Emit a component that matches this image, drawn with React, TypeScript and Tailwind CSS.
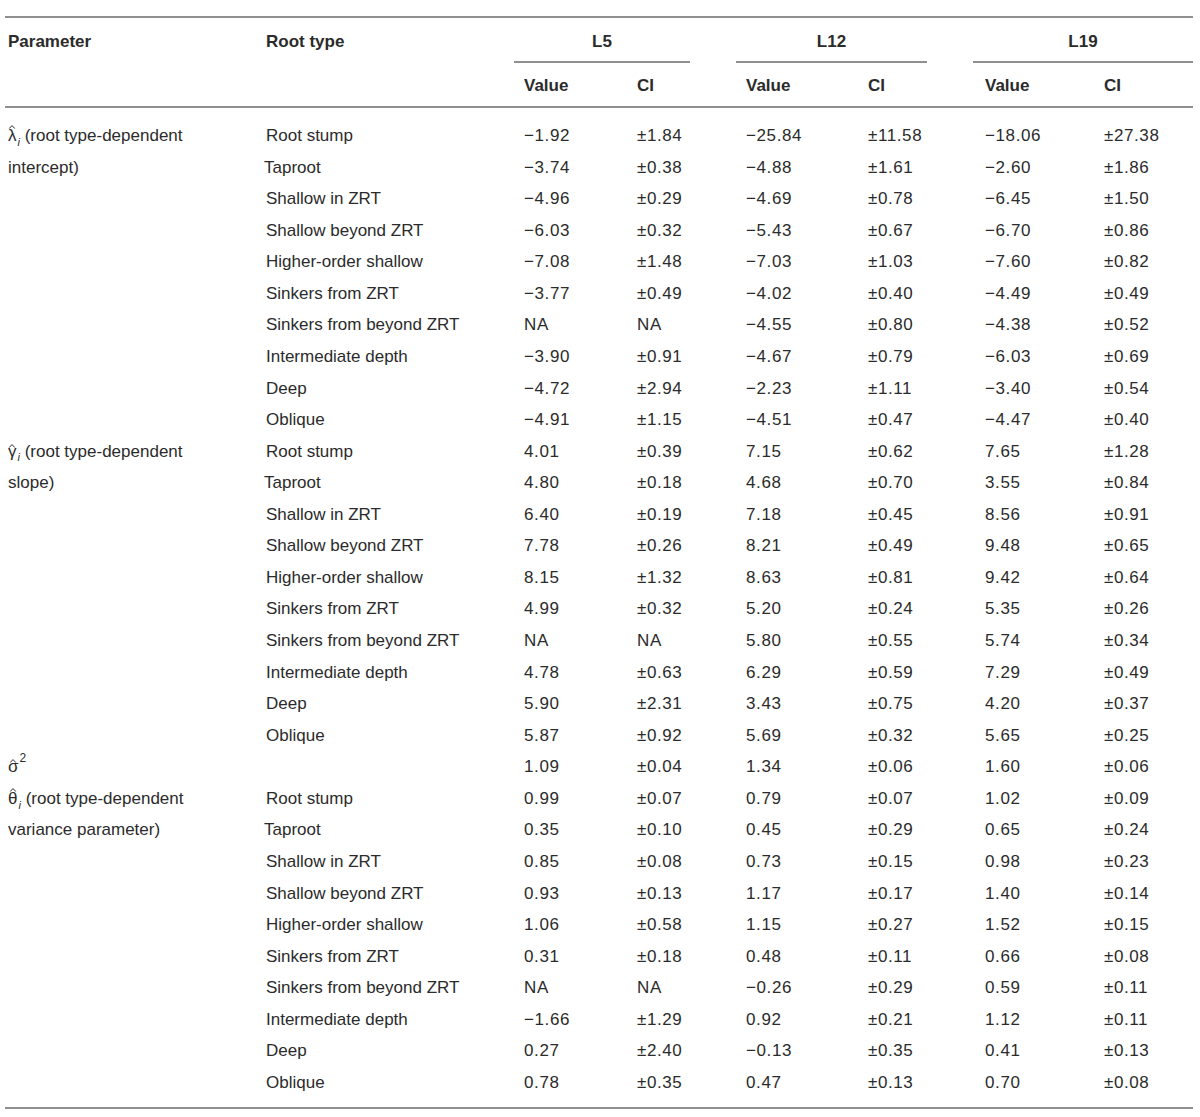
import React from "react";

type Row = { param?: React.ReactNode; root: string; v: string[] };

// circumflex accent drawn above a greek letter
const Hat = ({ ch, top }: { ch: string; top: string }) => (
  <span className="relative inline-block">
    {ch}
    <svg
      className={`absolute left-1/2 -translate-x-1/2 ${top}`}
      width="7"
      height="4"
      viewBox="0 0 7 4"
      fill="none"
    >
      <path d="M0.6 3.6 L3.5 0.6 L6.4 3.6" stroke="currentColor" strokeWidth="1" />
    </svg>
  </span>
);

const Sym = ({ ch, top }: { ch: string; top: string }) => (
  <span>
    <Hat ch={ch} top={top} />
    <sub className="italic text-[11px] align-[-2px] ml-[1px]">i</sub>
  </span>
);

const roots = [
  "Root stump",
  "Taproot",
  "Shallow in ZRT",
  "Shallow beyond ZRT",
  "Higher-order shallow",
  "Sinkers from ZRT",
  "Sinkers from beyond ZRT",
  "Intermediate depth",
  "Deep",
  "Oblique",
];

const lambda = [
  ["−1.92", "±1.84", "−25.84", "±11.58", "−18.06", "±27.38"],
  ["−3.74", "±0.38", "−4.88", "±1.61", "−2.60", "±1.86"],
  ["−4.96", "±0.29", "−4.69", "±0.78", "−6.45", "±1.50"],
  ["−6.03", "±0.32", "−5.43", "±0.67", "−6.70", "±0.86"],
  ["−7.08", "±1.48", "−7.03", "±1.03", "−7.60", "±0.82"],
  ["−3.77", "±0.49", "−4.02", "±0.40", "−4.49", "±0.49"],
  ["NA", "NA", "−4.55", "±0.80", "−4.38", "±0.52"],
  ["−3.90", "±0.91", "−4.67", "±0.79", "−6.03", "±0.69"],
  ["−4.72", "±2.94", "−2.23", "±1.11", "−3.40", "±0.54"],
  ["−4.91", "±1.15", "−4.51", "±0.47", "−4.47", "±0.40"],
];

const gamma = [
  ["4.01", "±0.39", "7.15", "±0.62", "7.65", "±1.28"],
  ["4.80", "±0.18", "4.68", "±0.70", "3.55", "±0.84"],
  ["6.40", "±0.19", "7.18", "±0.45", "8.56", "±0.91"],
  ["7.78", "±0.26", "8.21", "±0.49", "9.48", "±0.65"],
  ["8.15", "±1.32", "8.63", "±0.81", "9.42", "±0.64"],
  ["4.99", "±0.32", "5.20", "±0.24", "5.35", "±0.26"],
  ["NA", "NA", "5.80", "±0.55", "5.74", "±0.34"],
  ["4.78", "±0.63", "6.29", "±0.59", "7.29", "±0.49"],
  ["5.90", "±2.31", "3.43", "±0.75", "4.20", "±0.37"],
  ["5.87", "±0.92", "5.69", "±0.32", "5.65", "±0.25"],
];

const theta = [
  ["0.99", "±0.07", "0.79", "±0.07", "1.02", "±0.09"],
  ["0.35", "±0.10", "0.45", "±0.29", "0.65", "±0.24"],
  ["0.85", "±0.08", "0.73", "±0.15", "0.98", "±0.23"],
  ["0.93", "±0.13", "1.17", "±0.17", "1.40", "±0.14"],
  ["1.06", "±0.58", "1.15", "±0.27", "1.52", "±0.15"],
  ["0.31", "±0.18", "0.48", "±0.11", "0.66", "±0.08"],
  ["NA", "NA", "−0.26", "±0.29", "0.59", "±0.11"],
  ["−1.66", "±1.29", "0.92", "±0.21", "1.12", "±0.11"],
  ["0.27", "±2.40", "−0.13", "±0.35", "0.41", "±0.13"],
  ["0.78", "±0.35", "0.47", "±0.13", "0.70", "±0.08"],
];

const block = (
  first: React.ReactNode,
  second: string,
  data: string[][]
): Row[] =>
  data.map((v, i) => ({
    param: i === 0 ? first : i === 1 ? second : undefined,
    root: roots[i],
    v,
  }));

const rows: Row[] = [
  ...block(
    <>
      <Sym ch="λ" top="top-[2px]" /> (root type-dependent
    </>,
    "intercept)",
    lambda
  ),
  ...block(
    <>
      <Sym ch="γ" top="top-[5px]" /> (root type-dependent
    </>,
    "slope)",
    gamma
  ),
  {
    param: (
      <span>
        <Hat ch="σ" top="top-[5px]" />
        <sup className="text-[12px] align-[4px] ml-[1px]">2</sup>
      </span>
    ),
    root: "",
    v: ["1.09", "±0.04", "1.34", "±0.06", "1.60", "±0.06"],
  },
  ...block(
    <>
      <Sym ch="θ" top="top-[2px]" /> (root type-dependent
    </>,
    "variance parameter)",
    theta
  ),
];

const cols = "grid grid-cols-[253px_256px_113px_109px_122px_115px_121px_99px]";

export default function App() {
  return (
    <div
      className="w-[1200px] h-[1117px] bg-white text-[#2b2b2b] text-[17px]"
      style={{ fontFamily: '"Liberation Sans", Arial, sans-serif' }}
    >
      <div className="ml-[5px] w-[1188px] pt-[16px]">
        <div className="border-t-2 border-[#8f8f8f]" />
        <div className={`${cols} font-bold h-[43px] items-center pt-[4px]`}>
          <div className="pl-[3px]">Parameter</div>
          <div className="pl-[8px]">Root type</div>
          <div className="col-span-2 mr-[46px] text-center">L5</div>
          <div className="col-span-2 mr-[46px] text-center">L12</div>
          <div className="col-span-2 text-center">L19</div>
        </div>
        <div className={cols}>
          <div />
          <div />
          <div className="col-span-2 mr-[46px] border-t-2 border-[#8f8f8f]" />
          <div className="col-span-2 mr-[46px] border-t-2 border-[#8f8f8f]" />
          <div className="col-span-2 border-t-2 border-[#8f8f8f]" />
        </div>
        <div className={`${cols} font-bold h-[43px] items-center pt-[2px]`}>
          <div />
          <div />
          <div className="pl-[10px]">Value</div>
          <div className="pl-[10px]">CI</div>
          <div className="pl-[10px]">Value</div>
          <div className="pl-[10px]">CI</div>
          <div className="pl-[12px]">Value</div>
          <div className="pl-[10px]">CI</div>
        </div>
        <div className="border-t-2 border-[#8f8f8f]" />
        <div className="pt-[12px] pb-[9px]">
          {rows.map((r, i) => (
            <div key={i} className={`${cols} h-[31.57px] items-center whitespace-nowrap`}>
              <div className="pl-[3px]">{r.param}</div>
              <div className={r.root === "Taproot" ? "pl-[6px]" : "pl-[8px]"}>{r.root}</div>
              {r.v.map((x, j) => (
                <div key={j} className={`tracking-[0.6px] ${j === 4 ? "pl-[12px]" : "pl-[10px]"}`}>
                  {x}
                </div>
              ))}
            </div>
          ))}
        </div>
        <div className="border-t-2 border-[#8f8f8f]" />
      </div>
    </div>
  );
}
